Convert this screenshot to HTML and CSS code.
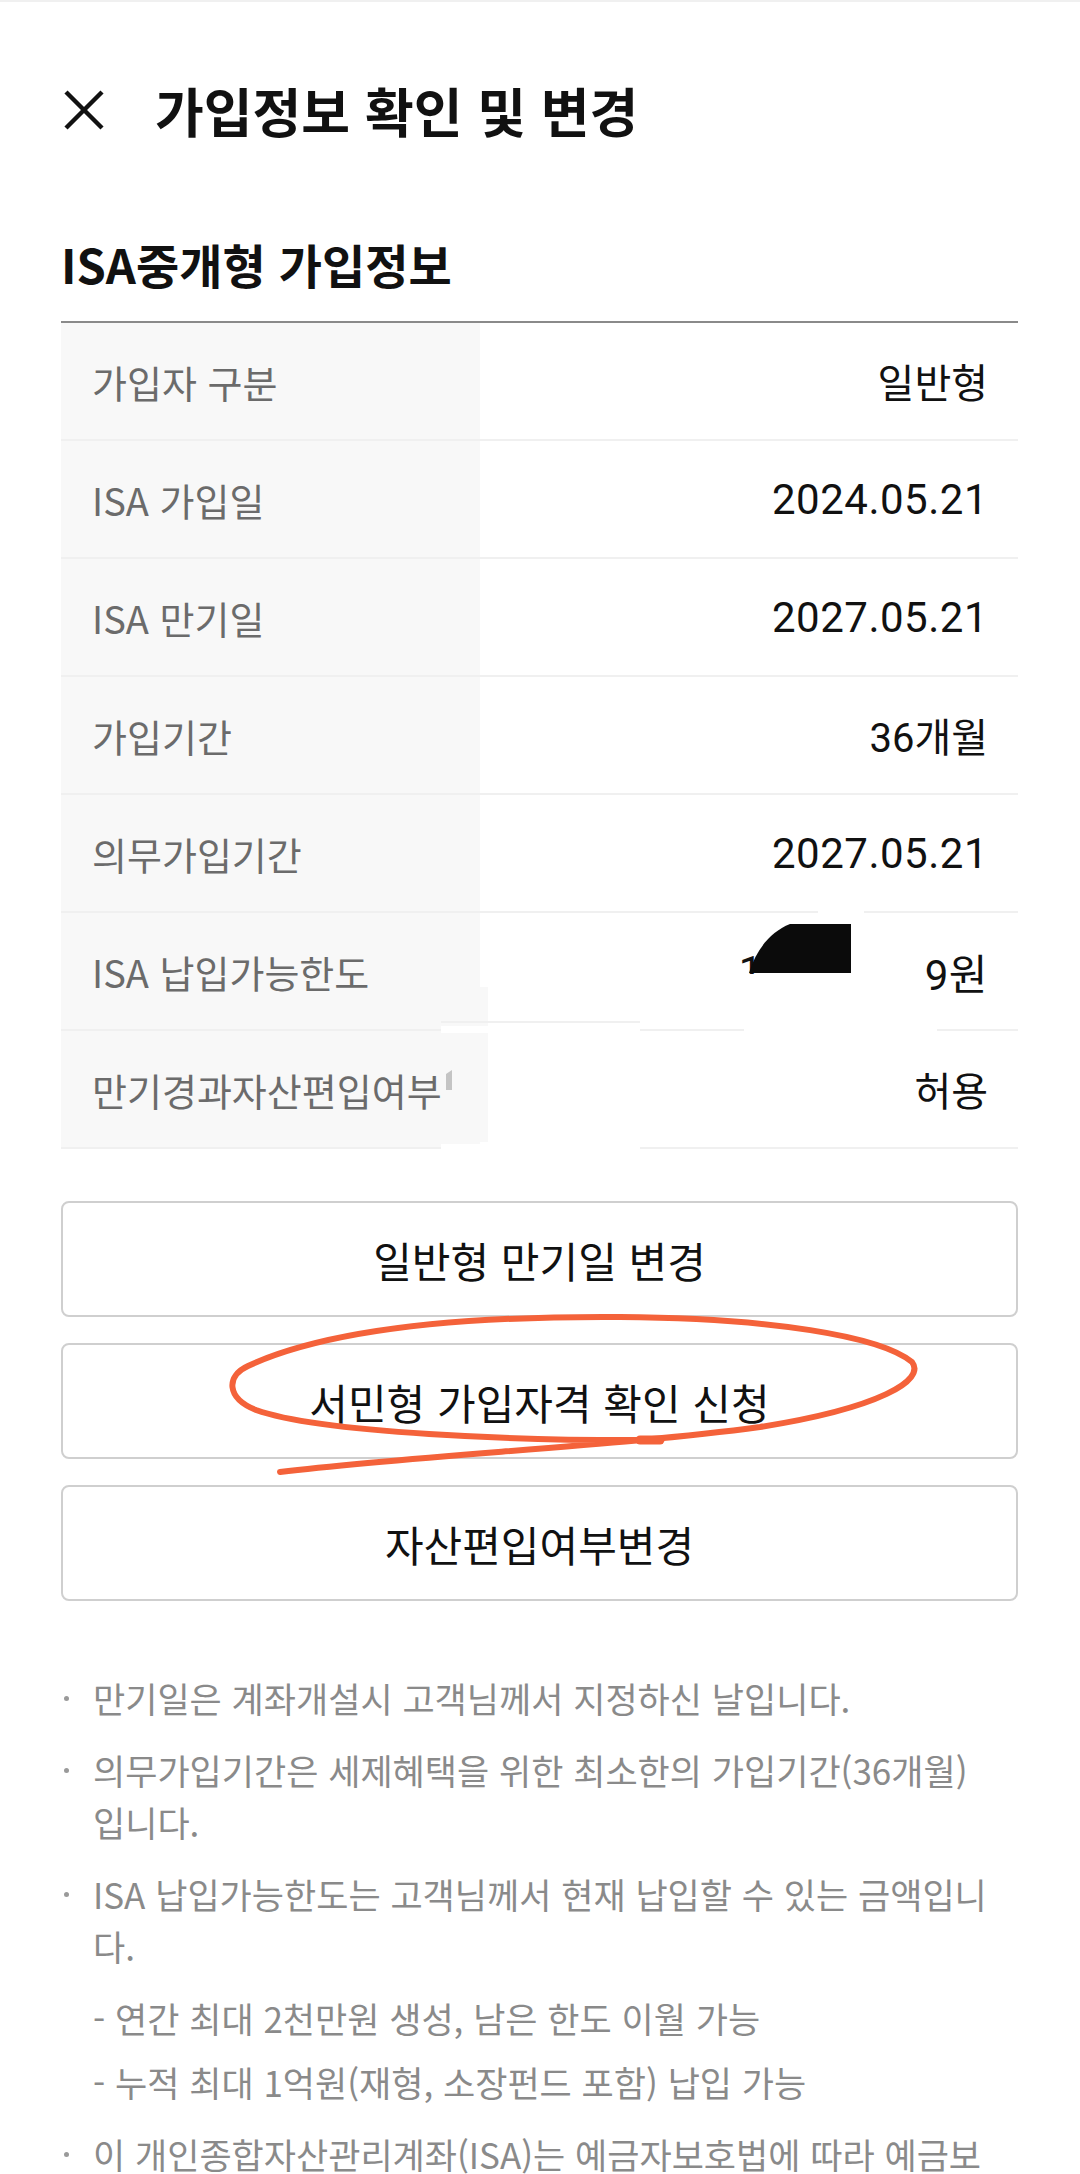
FILE: index.html
```html
<!DOCTYPE html>
<html lang="ko">
<head>
    <meta charset="UTF-8">
    <title>가입정보 확인 및 변경</title>
    <link rel="stylesheet" href="styles.css">
</head>
<body>

<div class="page">
    <div class="topline"></div>

    <!-- 상단 타이틀 -->
    <header class="top">
        <span class="close">
            <svg width="42" height="42" viewBox="0 0 42 42">
                <line x1="3" y1="3" x2="39" y2="39"/>
                <line x1="39" y1="3" x2="3" y2="39"/>
            </svg>
        </span>
        <h1>가입정보 확인 및 변경</h1>
    </header>

    <!-- 가입정보 표 -->
    <section class="info">
        <h2>ISA중개형 가입정보</h2>
        <dl class="rows">
            <div class="row"><dt>가입자 구분</dt><dd>일반형</dd></div>
            <div class="row"><dt>ISA 가입일</dt><dd class="num">2024.05.21</dd></div>
            <div class="row"><dt>ISA 만기일</dt><dd class="num">2027.05.21</dd></div>
            <div class="row"><dt>가입기간</dt><dd>36개월</dd></div>
            <div class="row"><dt>의무가입기간</dt><dd class="num">2027.05.21</dd></div>
            <div class="row"><dt>ISA 납입가능한도</dt><dd class="num">1<span class="hide"></span>9원</dd></div>
            <div class="row"><dt>만기경과자산편입여부</dt><dd>허용</dd></div>
        </dl>
    </section>

    <!-- 버튼 -->
    <div class="btns">
        <button>일반형 만기일 변경</button>
        <button>서민형 가입자격 확인 신청</button>
        <button>자산편입여부변경</button>
    </div>

    <!-- 안내문구 -->
    <ul class="notes">
        <li>만기일은 계좌개설시 고객님께서 지정하신 날입니다.</li>
        <li>의무가입기간은 세제혜택을 위한 최소한의 가입기간(36개월)<br>입니다.</li>
        <li>ISA 납입가능한도는 고객님께서 현재 납입할 수 있는 금액입니다.
            <ul class="sub">
                <li>- 연간 최대 2천만원 생성, 남은 한도 이월 가능</li>
                <li>- 누적 최대 1억원(재형, 소장펀드 포함) 납입 가능</li>
            </ul>
        </li>
        <li>이 개인종합자산관리계좌(ISA)는 예금자보호법에 따라 예금보호 대상이 아닙니다.</li>
    </ul>

    <!-- 가림 처리 + 손글씨 표시 -->
    <svg class="marks" width="1080" height="2174" viewBox="0 0 1080 2174">
        <rect x="480" y="987" width="8" height="155" fill="#f8f8f8"/>
        <rect x="441" y="1026" width="199" height="7" fill="#fff"/>
        <rect x="441" y="1021" width="199" height="2" fill="#f0f0f0"/>
        <rect x="744" y="1026" width="193" height="7" fill="#fff"/>
        <rect x="441" y="1144" width="199" height="7" fill="#fff"/>
        <rect x="818" y="909" width="46" height="7" fill="#fff"/>
        <rect x="744" y="974" width="150" height="18" fill="#fff"/>
        <path d="M446 1090V1074L452 1070V1090Z" fill="#c4c4c4"/>
        <path d="M790 924H851V973H749C756 950 770 932 790 924Z" fill="#0b0b0b"/>

        <path class="pen" d="M657 1440C520 1441 320 1433 256 1410C226 1398 226 1376 248 1366C330 1328 470 1316 620 1317C770 1318 880 1336 912 1362C926 1380 880 1408 760 1427C620 1446 420 1455 280 1472"/>
        <line class="pen thick" x1="640" y1="1440" x2="660" y2="1440"/>
    </svg>
</div>

</body>
</html>
```

FILE: styles.css
```css
* {
    margin: 0;
    padding: 0;
    box-sizing: border-box;
    list-style: none;
}
body {
    font-family: "Noto Sans CJK KR", sans-serif;
    color: #111;
    background: #fff;
}
.page {
    position: relative;
    height: 2174px;
    overflow: hidden;
    padding: 0 62px 0 61px;
}
.topline {
    height: 2px;
    margin: 0 -62px 0 -61px;
    background: #f0f0f0;
}

/* 타이틀 */
.top {
    display: flex;
    align-items: center;
    height: 120px;
    margin-top: 48px;
}
.close {
    display: flex;
    width: 42px;
    height: 42px;
    margin-left: 2px;
    margin-right: 50px;
}
.close line {
    stroke: #111;
    stroke-width: 4.5;
}
.top h1 {
    font-size: 53px;
    font-weight: 700;
    line-height: 120px;
}

/* 가입정보 */
.info h2 {
    font-size: 47px;
    font-weight: 700;
    line-height: 60px;
    margin: 64px 0 27px;
}
.rows {
    border-top: 2px solid #8a8a8a;
}
.row {
    display: flex;
    height: 118px;
    border-bottom: 2px solid #f0f0f0;
}
.row dt {
    display: flex;
    align-items: center;
    width: 419px;
    padding-left: 31px;
    background: #f8f8f8;
    color: #6b6b6b;
    font-size: 38px;
}
.row dd {
    flex: 1;
    display: flex;
    align-items: center;
    justify-content: flex-end;
    padding-right: 30px;
    font-family: Roboto, "Noto Sans CJK KR", sans-serif;
    font-size: 40px;
}
.row dd.num {
    font-size: 42px;
    letter-spacing: 0.5px;
}
.hide {
    display: inline-block;
    width: 162px;
}

/* 버튼 */
.btns {
    display: flex;
    flex-direction: column;
    gap: 26px;
    margin-top: 52px;
}
.btns button {
    height: 116px;
    border: 2px solid #cfcfcf;
    border-radius: 8px;
    background: #fff;
    color: #111;
    font: 400 42px "Noto Sans CJK KR", sans-serif;
}

/* 안내 */
.notes {
    margin-top: 71px;
    padding: 0 18px 0 32px;
    color: #8a8a8a;
    font-size: 35px;
    line-height: 52px;
}
.notes > li {
    position: relative;
}
.notes > li + li {
    margin-top: 20px;
}
.notes > li::before {
    content: "";
    position: absolute;
    left: -29px;
    top: 24px;
    width: 5px;
    height: 5px;
    border-radius: 50%;
    background: #9a9a9a;
}
.sub {
    margin-top: 20px;
}
.sub li + li {
    margin-top: 12px;
}

/* 덧그림 */
.marks {
    position: absolute;
    left: 0;
    top: 0;
    pointer-events: none;
}
.pen {
    fill: none;
    stroke: #f4623a;
    stroke-width: 6;
    stroke-linecap: round;
}
.pen.thick {
    stroke-width: 9;
}
```
